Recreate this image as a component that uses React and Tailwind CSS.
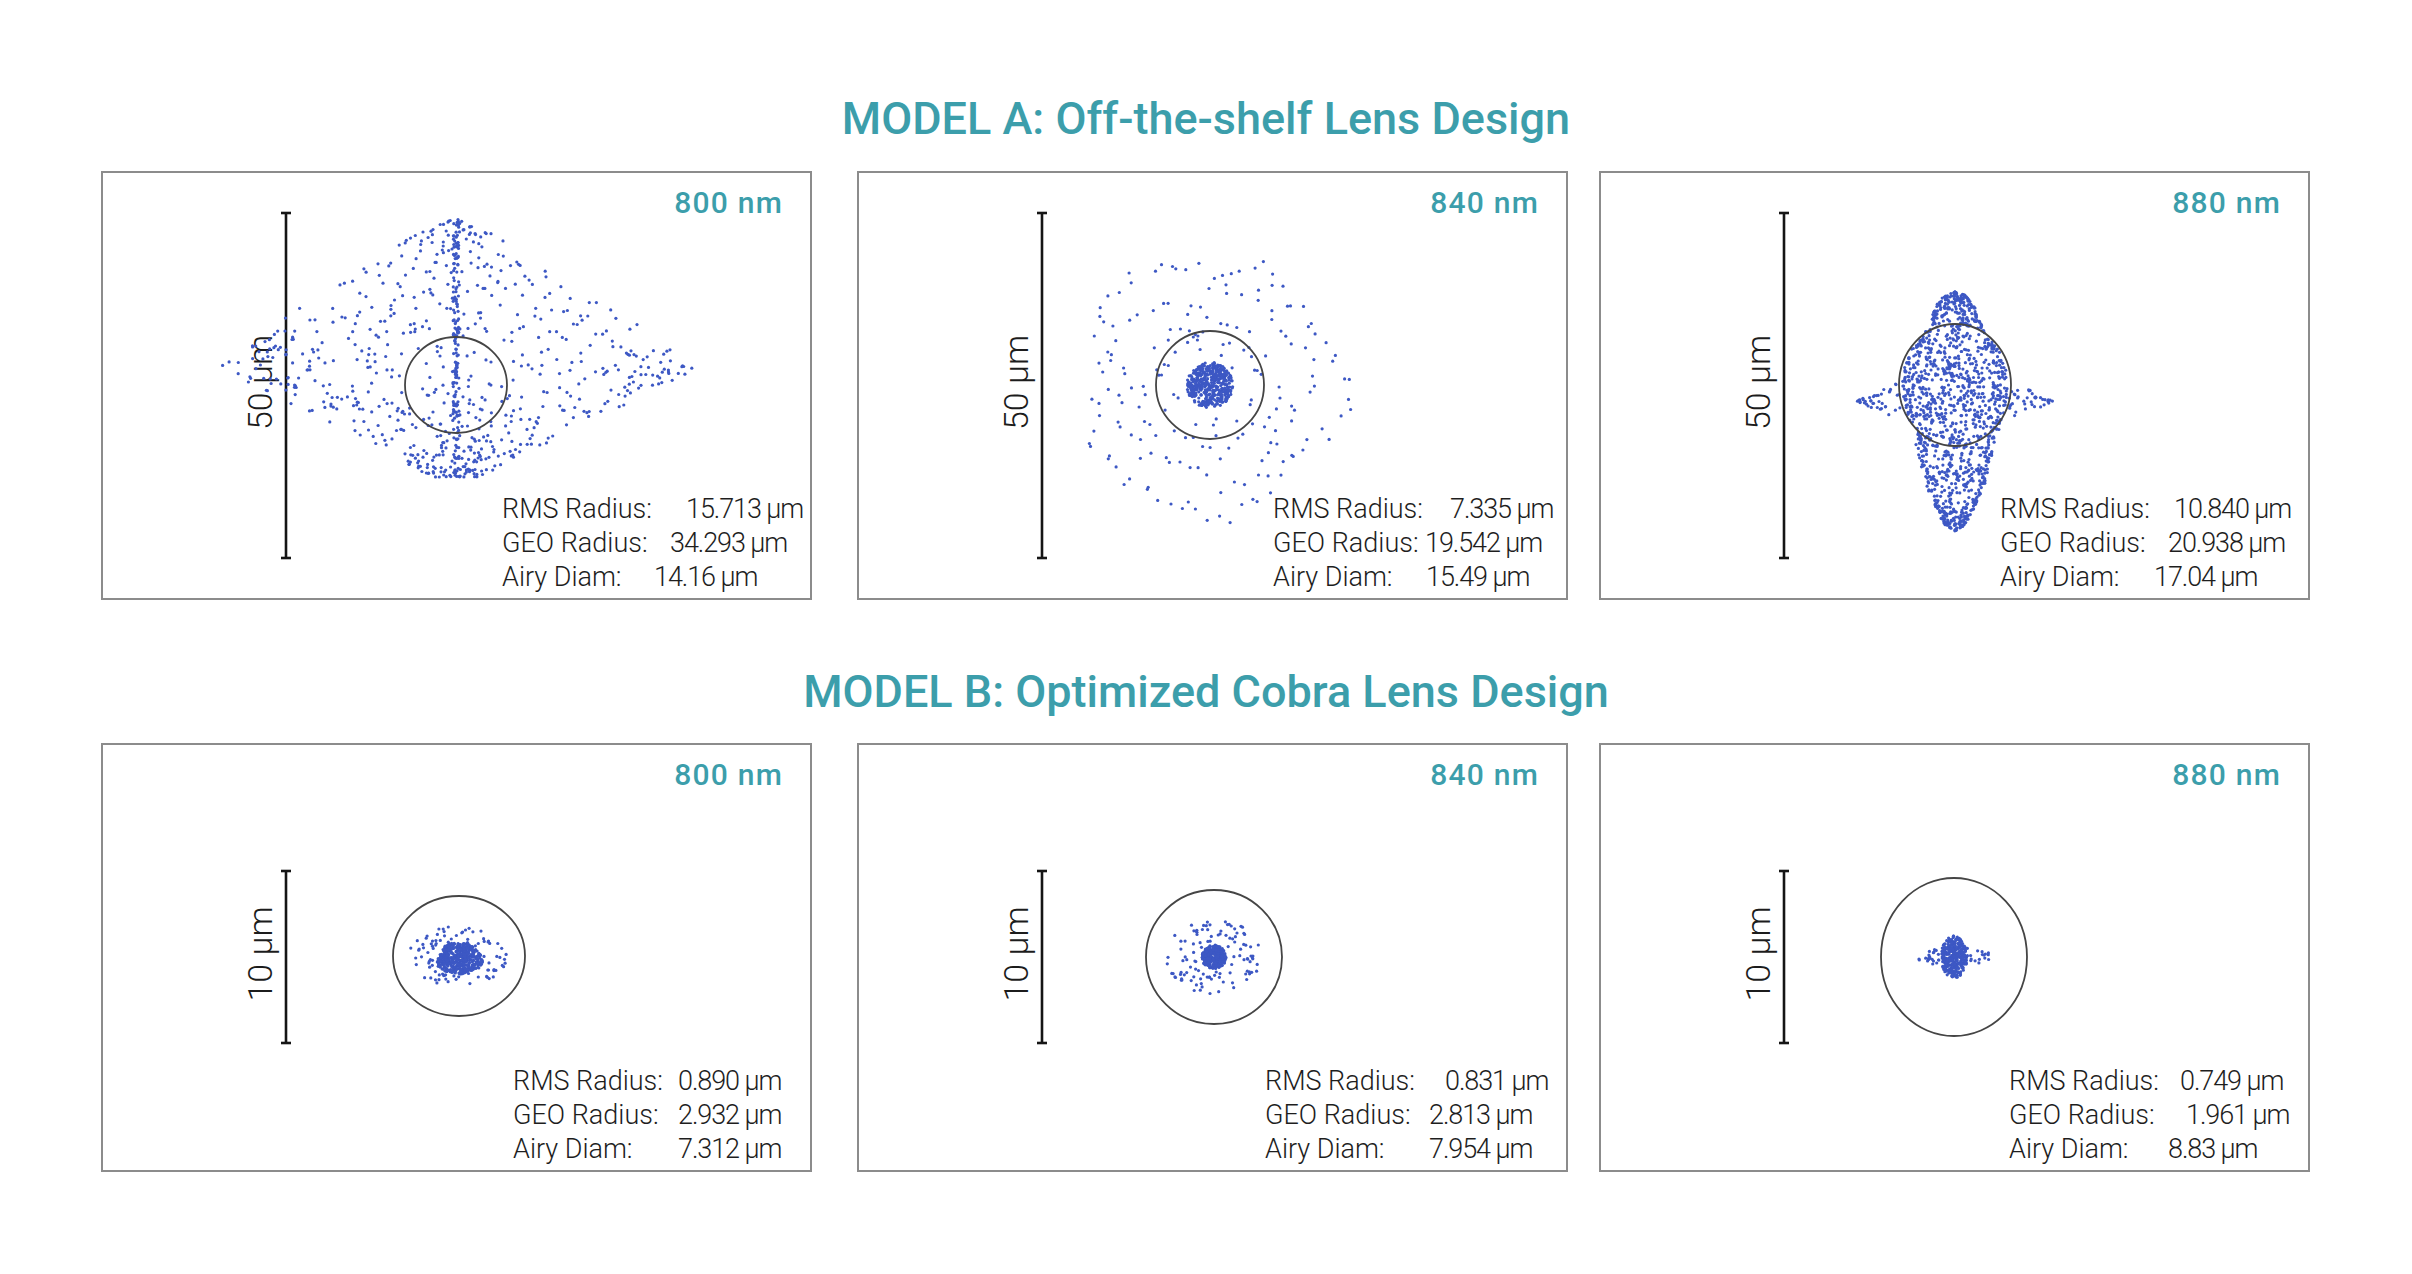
import React from "react";

function mulberry32(a) {
  return function () {
    a |= 0;
    a = (a + 0x6d2b79f5) | 0;
    let t = Math.imul(a ^ (a >>> 15), 1 | a);
    t = (t + Math.imul(t ^ (t >>> 7), 61 | t)) ^ t;
    return ((t ^ (t >>> 14)) >>> 0) / 4294967296;
  };
}

function interp(table, y) {
  for (let i = 0; i < table.length - 1; i++) {
    const [y0, w0] = table[i];
    const [y1, w1] = table[i + 1];
    if (y >= y0 && y <= y1) return w0 + ((w1 - w0) * (y - y0)) / (y1 - y0);
  }
  return 0;
}

const TAU = Math.PI * 2;

function genA1(rnd) {
  const pts = [];
  const top = -166, mid = -16, bot = 92, W = 240;
  const half = (y) =>
    y < mid ? W * Math.pow((y - top) / (mid - top), 0.8) : 25 + ((W - 25) * (bot - y)) / (bot - mid);
  // dense central column
  for (let i = 0; i < 160; i++) {
    const y = top + 4 + rnd() * (bot - top - 4);
    pts.push([(rnd() - 0.5) * 6, y]);
  }
  // apex cluster
  for (let i = 0; i < 45; i++) {
    const y = top + rnd() * 35;
    const h = half(y);
    pts.push([(rnd() * 2 - 1) * h, y]);
  }
  // lower dense band
  for (let i = 0; i < 170; i++) {
    const y = bot - Math.pow(rnd(), 1.3) * 85;
    const h = half(y);
    pts.push([(rnd() * 2 - 1) * h * 0.95, y]);
  }
  // tips
  for (let i = 0; i < 50; i++) {
    const s = rnd() < 0.5 ? -1 : 1;
    const y = mid + (rnd() * 2 - 1) * 22;
    const h = half(y);
    pts.push([s * h * (0.75 + 0.25 * rnd()), y]);
  }
  let n = 0;
  while (n < 400) {
    const x = (rnd() * 2 - 1) * W;
    const y = top + rnd() * (bot - top);
    if (Math.abs(x) <= half(y)) {
      pts.push([x, y]);
      n++;
    }
  }
  return pts;
}

function genA2(rnd) {
  const pts = [];
  for (let i = 0; i < 450; i++) {
    const r = 23 * Math.sqrt(rnd()), t = rnd() * TAU;
    pts.push([r * Math.cos(t), r * Math.sin(t)]);
  }
  for (let i = 0; i < 25; i++) {
    const r = 28 + rnd() * 25, t = rnd() * TAU;
    pts.push([r * Math.cos(t), r * Math.sin(t)]);
  }
  const rings = [
    [64, 40, 0.3],
    [94, 56, 1.7],
    [122, 76, 0.9],
  ];
  for (const [R, n, ph] of rings) {
    for (let i = 0; i < n; i++) {
      const t = (TAU * i) / n + (rnd() - 0.5) * 0.1;
      const rr = R * (1 + 0.08 * Math.sin(5 * t + ph) + 0.05 * Math.sin(3 * t + ph * 2)) + (rnd() - 0.5) * 18;
      pts.push([rr * Math.cos(t), rr * Math.sin(t)]);
    }
  }
  return pts;
}

function genA3(rnd) {
  const pts = [];
  const table = [
    [-93, 0], [-90, 11], [-80, 19], [-68, 23], [-55, 29], [-35, 44], [-10, 53], [10, 53],
    [35, 47], [65, 38], [98, 30], [125, 19], [140, 10], [146, 0],
  ];
  let n = 0;
  while (n < 950) {
    const x = (rnd() * 2 - 1) * 55;
    const y = -93 + rnd() * 239;
    if (Math.abs(x) < interp(table, y)) {
      pts.push([x, y]);
      n++;
    }
  }
  for (let i = 0; i < 200; i++) {
    const y = -93 + rnd() * 239;
    const w = interp(table, y);
    const s = rnd() < 0.5 ? -1 : 1;
    pts.push([s * w * (0.8 + 0.2 * rnd()), y]);
  }
  for (let i = 0; i < 60; i++) {
    const y = -93 + rnd() * 22;
    const w = interp(table, y);
    pts.push([(rnd() * 2 - 1) * w, y]);
  }
  for (let i = 0; i < 60; i++) {
    const y = 120 + rnd() * 26;
    const w = interp(table, y);
    pts.push([(rnd() * 2 - 1) * w, y]);
  }
  for (const s of [-1, 1]) {
    for (let i = 0; i < 40; i++) {
      const t = rnd();
      const x = s * (99 - t * 45);
      const y = 16 + (rnd() * 2 - 1) * t * 20;
      pts.push([x, y]);
    }
  }
  return pts;
}

function genB1(rnd) {
  const pts = [];
  for (let i = 0; i < 460; i++) {
    const t = rnd() * TAU, r = Math.sqrt(rnd());
    const rx = 22 * (1 + 0.12 * Math.sin(3 * t + 0.5));
    pts.push([r * Math.cos(t) * rx, r * Math.sin(t) * 16 + 2]);
  }
  let n = 0;
  while (n < 95) {
    const x = (rnd() * 2 - 1) * 50, y = (rnd() * 2 - 1) * 30 - 2;
    const d = (x / 50) ** 2 + (y / 30) ** 2;
    if (d <= 1 && d > 0.2) {
      pts.push([x, y]);
      n++;
    }
  }
  return pts;
}

function genB2(rnd) {
  const pts = [];
  for (let i = 0; i < 280; i++) {
    const r = 12 * Math.sqrt(rnd()), t = rnd() * TAU;
    pts.push([r * Math.cos(t), r * Math.sin(t)]);
  }
  let n = 0;
  while (n < 110) {
    const x = (rnd() * 2 - 1) * 48, y = (rnd() * 2 - 1) * 38;
    const d = (x / 48) ** 2 + (y / 38) ** 2;
    if (d <= 1 && Math.hypot(x, y) > 15) {
      pts.push([x, y]);
      n++;
    }
  }
  return pts;
}

function genB3(rnd) {
  const pts = [];
  for (let i = 0; i < 330; i++) {
    const r = Math.sqrt(rnd()), t = rnd() * TAU;
    pts.push([r * Math.cos(t) * 13, r * Math.sin(t) * 21]);
  }
  for (let i = 0; i < 45; i++) {
    const s = rnd() < 0.5 ? -1 : 1;
    const ax = 10 + rnd() * 26;
    const y = (rnd() - 0.5) * 2 * (9 * (1 - ax / 40) + 3);
    pts.push([s * ax, y]);
  }
  return pts;
}

const panelsA = [
  {
    key: "a1",
    ml: "ml-0",
    label: "800 nm",
    bar: "50 µm",
    barY: [42, 387],
    pts: genA1(mulberry32(11)),
    c: [355, 214, 51, 48],
    pl: "pl-[399px]",
    stats: [
      { l: "RMS Radius:", v: "15.713 µm", w: "w-[184px]" },
      { l: "GEO Radius:", v: "34.293 µm", w: "w-[168px]" },
      { l: "Airy Diam:", v: "14.16 µm", w: "w-[152px]" },
    ],
  },
  {
    key: "a2",
    ml: "ml-[45px]",
    label: "840 nm",
    bar: "50 µm",
    barY: [42, 387],
    pts: genA2(mulberry32(22)),
    c: [353, 214, 54, 54],
    pl: "pl-[414px]",
    stats: [
      { l: "RMS Radius:", v: "7.335 µm", w: "w-[177px]" },
      { l: "GEO Radius:", v: "19.542 µm", w: "w-[152px]" },
      { l: "Airy Diam:", v: "15.49 µm", w: "w-[153px]" },
    ],
  },
  {
    key: "a3",
    ml: "ml-[31px]",
    label: "880 nm",
    bar: "50 µm",
    barY: [42, 387],
    pts: genA3(mulberry32(33)),
    c: [356, 214, 56, 61],
    pl: "pl-[399px]",
    stats: [
      { l: "RMS Radius:", v: "10.840 µm", w: "w-[174px]" },
      { l: "GEO Radius:", v: "20.938 µm", w: "w-[168px]" },
      { l: "Airy Diam:", v: "17.04 µm", w: "w-[154px]" },
    ],
  },
];

const panelsB = [
  {
    key: "b1",
    ml: "ml-0",
    label: "800 nm",
    bar: "10 µm",
    barY: [128, 300],
    pts: genB1(mulberry32(44)),
    c: [358, 213, 66, 60],
    pl: "pl-[410px]",
    stats: [
      { l: "RMS Radius:", v: "0.890 µm", w: "w-[165px]" },
      { l: "GEO Radius:", v: "2.932 µm", w: "w-[165px]" },
      { l: "Airy Diam:", v: "7.312 µm", w: "w-[165px]" },
    ],
  },
  {
    key: "b2",
    ml: "ml-[45px]",
    label: "840 nm",
    bar: "10 µm",
    barY: [128, 300],
    pts: genB2(mulberry32(55)),
    c: [357, 214, 68, 67],
    pl: "pl-[406px]",
    stats: [
      { l: "RMS Radius:", v: "0.831 µm", w: "w-[180px]" },
      { l: "GEO Radius:", v: "2.813 µm", w: "w-[164px]" },
      { l: "Airy Diam:", v: "7.954 µm", w: "w-[164px]" },
    ],
  },
  {
    key: "b3",
    ml: "ml-[31px]",
    label: "880 nm",
    bar: "10 µm",
    barY: [128, 300],
    pts: genB3(mulberry32(66)),
    c: [355, 214, 73, 79],
    pl: "pl-[408px]",
    stats: [
      { l: "RMS Radius:", v: "0.749 µm", w: "w-[171px]" },
      { l: "GEO Radius:", v: "1.961 µm", w: "w-[177px]" },
      { l: "Airy Diam:", v: "8.83 µm", w: "w-[159px]" },
    ],
  },
];

function Panel({ p }) {
  const [cx, cy, rx, ry] = p.c;
  const [y1, y2] = p.barY;
  return (
    <div className={`relative w-[711px] h-[429px] shrink-0 border-2 border-[#8c8c8c] flex flex-col justify-between ${p.ml}`}>
      <svg className="absolute left-[-2px] top-[-2px]" width="711" height="429" viewBox="0 0 711 429">
        <g stroke="#151515" strokeWidth="2.6">
          <line x1="185" y1={y1} x2="185" y2={y2} />
          <line x1="180" y1={y1} x2="190" y2={y1} />
          <line x1="180" y1={y2} x2="190" y2={y2} />
        </g>
        <text
          transform={`translate(171 ${(y1 + y2) / 2 - 3}) rotate(-90)`}
          textAnchor="middle"
          fontFamily="Roboto, 'Liberation Sans', sans-serif"
          fontWeight="300"
          fontSize="34"
          fill="#1c1c1c"
        >
          {p.bar}
        </text>
        <g fill="#3d58c4">
          {p.pts.map(([x, y], i) => (
            <circle key={i} cx={(cx + x).toFixed(1)} cy={(cy + y).toFixed(1)} r="1.6" />
          ))}
        </g>
        <ellipse cx={cx} cy={cy} rx={rx} ry={ry} fill="none" stroke="#454545" strokeWidth="1.8" />
      </svg>
      <div className="relative flex justify-end pt-[15px] pr-[27px] text-[30px] leading-[30px] font-medium tracking-[0.04em] text-[#3c9eab]">
        {p.label}
      </div>
      <div className={`relative pb-[4px] text-[27px] leading-[34px] font-light text-[#1e1e1e] ${p.pl}`}>
        {p.stats.map((s) => (
          <div key={s.l} className="flex whitespace-nowrap">
            <span className={`shrink-0 ${s.w}`}>{s.l}</span>
            <span className="tracking-[-0.04em]">{s.v}</span>
          </div>
        ))}
      </div>
    </div>
  );
}

export default function App() {
  return (
    <div className="w-[2412px] h-[1274px] bg-white flex flex-col items-center pt-[96px] font-[family-name:Roboto,'Liberation_Sans',sans-serif]">
      <h1 className="text-[45px] leading-[45px] font-medium text-[#3c9eab]">MODEL A: Off-the-shelf Lens Design</h1>
      <div className="self-stretch flex pl-[101px] mt-[30px]">
        {panelsA.map((p) => (
          <Panel key={p.key} p={p} />
        ))}
      </div>
      <h1 className="mt-[69px] text-[45px] leading-[45px] font-medium text-[#3c9eab]">MODEL B: Optimized Cobra Lens Design</h1>
      <div className="self-stretch flex pl-[101px] mt-[29px]">
        {panelsB.map((p) => (
          <Panel key={p.key} p={p} />
        ))}
      </div>
    </div>
  );
}
